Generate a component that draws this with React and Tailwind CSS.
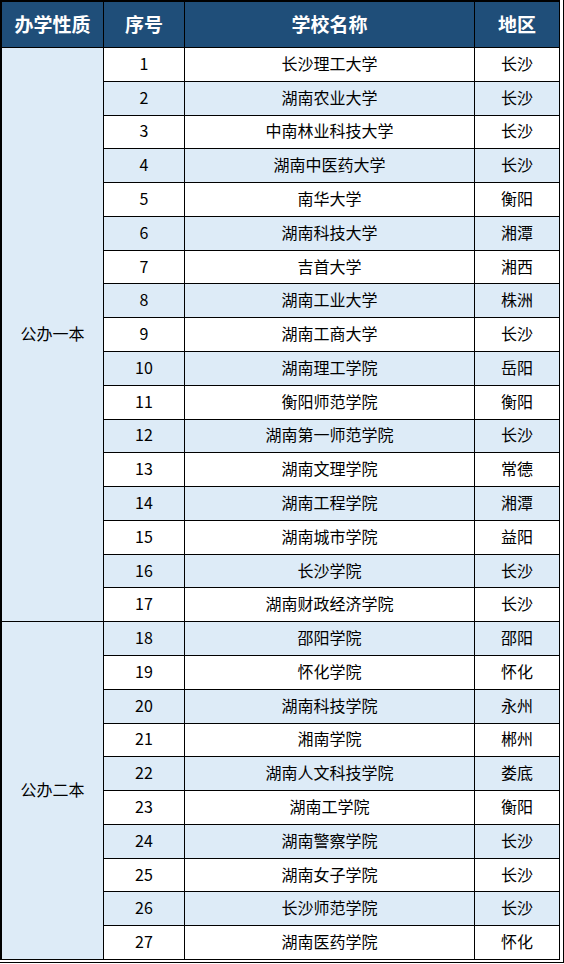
import React from 'react'

const groups = [
    {
        name: '公办一本',
        schools: [
            ['长沙理工大学', '长沙'],
            ['湖南农业大学', '长沙'],
            ['中南林业科技大学', '长沙'],
            ['湖南中医药大学', '长沙'],
            ['南华大学', '衡阳'],
            ['湖南科技大学', '湘潭'],
            ['吉首大学', '湘西'],
            ['湖南工业大学', '株洲'],
            ['湖南工商大学', '长沙'],
            ['湖南理工学院', '岳阳'],
            ['衡阳师范学院', '衡阳'],
            ['湖南第一师范学院', '长沙'],
            ['湖南文理学院', '常德'],
            ['湖南工程学院', '湘潭'],
            ['湖南城市学院', '益阳'],
            ['长沙学院', '长沙'],
            ['湖南财政经济学院', '长沙'],
        ],
    },
    {
        name: '公办二本',
        schools: [
            ['邵阳学院', '邵阳'],
            ['怀化学院', '怀化'],
            ['湖南科技学院', '永州'],
            ['湘南学院', '郴州'],
            ['湖南人文科技学院', '娄底'],
            ['湖南工学院', '衡阳'],
            ['湖南警察学院', '长沙'],
            ['湖南女子学院', '长沙'],
            ['长沙师范学院', '长沙'],
            ['湖南医药学院', '怀化'],
        ],
    },
]

const font = { fontFamily: '"Noto Sans CJK SC", "Noto Sans", sans-serif' }

const App = () => {
    let n = 0
    return (
        <div className="w-[564px] h-[963px] bg-white pr-[3px] pb-[2px] border-r border-b border-black" style={font}>
            <div className="w-[560px] h-[960px] border-l-2 border-t-2 border-r border-b border-black bg-black grid grid-cols-[101px_80px_289px_84px] grid-rows-[45px_repeat(27,minmax(0,1fr))] gap-px text-black text-[16px]">
                {['办学性质', '序号', '学校名称', '地区'].map((h) => (
                    <div key={h} className="bg-[#1f4e79] text-white font-bold text-[19px] flex items-center justify-center">
                        {h}
                    </div>
                ))}
                {groups.map((g, gi) => (
                    <React.Fragment key={g.name}>
                        <div
                            className={`bg-[#ddebf7] flex items-center justify-center pb-[3px] col-start-1 ${gi === 0 ? 'row-start-2 row-span-17' : 'row-start-19 row-span-10'}`}
                        >
                            {g.name}
                        </div>
                        {g.schools.map(([school, area]) => {
                            n += 1
                            const bg = n % 2 === 0 ? 'bg-[#ddebf7]' : 'bg-white'
                            return (
                                <React.Fragment key={school}>
                                    <div className={`${bg} col-start-2 flex items-center justify-center pb-[3px]`}>{n}</div>
                                    <div className={`${bg} flex items-center justify-center pb-[3px]`}>{school}</div>
                                    <div className={`${bg} flex items-center justify-center pb-[3px]`}>{area}</div>
                                </React.Fragment>
                            )
                        })}
                    </React.Fragment>
                ))}
            </div>
        </div>
    )
}

export default App
